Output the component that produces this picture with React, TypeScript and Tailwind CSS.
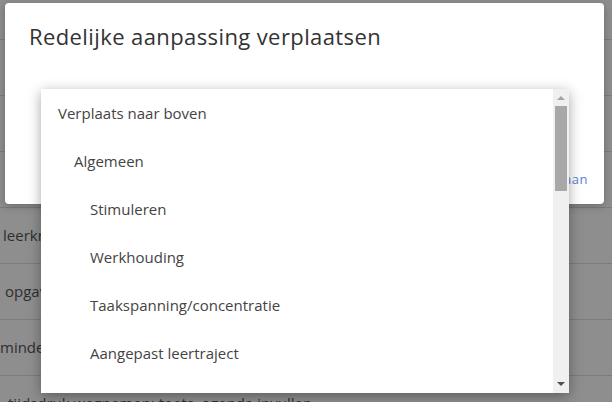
import React from "react";

export default function App() {
  const items = [
    { label: "Verplaats naar boven", indent: 0 },
    { label: "Algemeen", indent: 1 },
    { label: "Stimuleren", indent: 2 },
    { label: "Werkhouding", indent: 2 },
    { label: "Taakspanning/concentratie", indent: 2 },
    { label: "Aangepast leertraject", indent: 2 },
    { label: "Extra tijd", indent: 2 },
  ];
  const bgRows = [
    "",
    "",
    "",
    "",
    "leerkracht",
    "opgaven",
    "minder",
    "tijdsdruk wegnemen: toets, agenda invullen",
  ];
  const bgLeft = [0, 0, 0, 0, 3, 5, 0, 8];
  return (
    <div
      className="relative w-[612px] h-[402px] overflow-hidden bg-[#8e8e8e]"
      style={{ fontFamily: "'Open Sans', Lato, sans-serif" }}
    >
      {/* background table */}
      <div className="flex flex-col -mt-4">
        {bgRows.map((t, i) => (
          <div
            key={i}
            className="h-14 shrink-0 border-b border-[#7c7c7c] flex items-center text-[15px] text-[#2e2e2e] whitespace-nowrap"
            style={{ paddingLeft: bgLeft[i] }}
          >
            {t}
          </div>
        ))}
      </div>

      {/* dialog */}
      <div className="absolute left-[5px] top-[3px] w-[599px] h-[201px] bg-white rounded-[4px] shadow-[0_2px_8px_rgba(0,0,0,0.25)]">
        <div className="pl-[24px] pt-[19px] text-[22px] tracking-[0.4px] text-[#333] leading-[28px]">
          Redelijke aanpassing verplaatsen
        </div>
        <div className="absolute right-[16px] top-[167px] text-[13px] tracking-[0.5px] text-[#5b86d6]">
          Opslaan
        </div>
      </div>

      {/* dropdown */}
      <div className="absolute left-[41px] top-[89px] w-[528px] h-[304px] bg-white shadow-[0_3px_12px_rgba(0,0,0,0.35)] flex">
        <div className="flex-1 overflow-hidden">
          {items.map((it, i) => (
            <div
              key={i}
              className="h-12 flex items-center text-[15px] text-[#444] whitespace-nowrap"
              style={{ paddingLeft: 17 + it.indent * 16 }}
            >
              {it.label}
            </div>
          ))}
        </div>
        <div className="w-[16px] bg-[#f0f0f0] flex flex-col items-center">
          <div className="h-[17px] flex items-center justify-center">
            <svg width="8" height="5" viewBox="0 0 8 5">
              <path d="M0 5 L4 1 L8 5 Z" fill="#a3a3a3" />
            </svg>
          </div>
          <div className="w-[12px] h-[85px] bg-[#a8a8a8]" />
          <div className="flex-1" />
          <div className="h-[17px] flex items-center justify-center">
            <svg width="8" height="5" viewBox="0 0 8 5">
              <path d="M0 0 L8 0 L4 4 Z" fill="#505050" />
            </svg>
          </div>
        </div>
      </div>
    </div>
  );
}
